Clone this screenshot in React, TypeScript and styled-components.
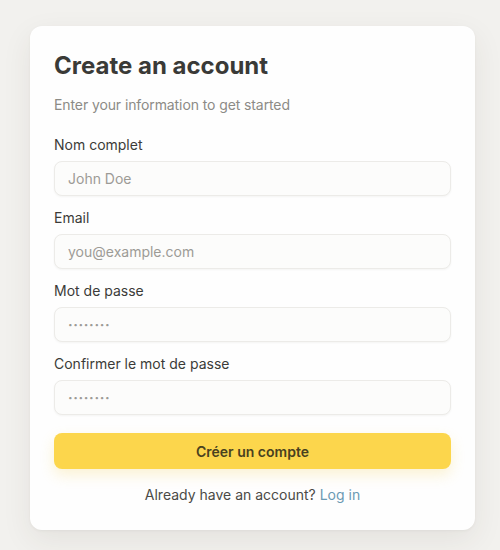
import styled, { createGlobalStyle } from 'styled-components';

const GlobalStyle = createGlobalStyle`
    * {
        box-sizing: border-box;
    }

    body {
        margin: 0;
        background-color: #f2f1ee;
        font-family: Inter, "Noto Sans", "Liberation Sans", sans-serif;
        color: #3b3b38;
    }
`;

const Page = styled.div`
    min-height: 550px;
    display: flex;
    justify-content: flex-start;
    padding: 26px 0 0 30px;
`;

const Card = styled.form`
    width: 445px;
    align-self: flex-start;
    background: #fefefe;
    border-radius: 12px;
    padding: 24px 24px 25px;
    box-shadow: 0 10px 30px rgba(60, 55, 40, 0.08), 0 1px 3px rgba(60, 55, 40, 0.05);
    display: flex;
    flex-direction: column;
`;

const Title = styled.h1`
    margin: 0;
    font-size: 24px;
    line-height: 32px;
    font-weight: 700;
    color: #3a3a37;
`;

const Subtitle = styled.p`
    margin: 13px 0 20px;
    font-size: 14px;
    line-height: 20px;
    color: #8c8b86;
    letter-spacing: -0.1px;
`;

const Field = styled.div`
    display: flex;
    flex-direction: column;
    gap: 6px;
    margin-bottom: 12px;
`;

const Label = styled.label`
    font-size: 14px;
    line-height: 20px;
    font-weight: 400;
    color: #3b3b38;
`;

const Input = styled.input<{ $secret?: boolean }>`
    height: 35px;
    width: 100%;
    border: 1px solid #ecebe8;
    border-radius: 8px;
    background: #fcfcfb;
    padding: 0 13px;
    font-family: inherit;
    font-size: 14px;
    color: #3b3b38;
    box-shadow: 0 1px 2px rgba(60, 55, 40, 0.05);
    outline: none;

    &::placeholder {
        color: #9c9b96;
        letter-spacing: ${({ $secret }) => ($secret ? '0.6px' : '0')};
        font-weight: ${({ $secret }) => ($secret ? 700 : 400)};
    }
`;

const SubmitButton = styled.button`
    margin-top: 6px;
    height: 36px;
    width: 100%;
    border: none;
    border-radius: 8px;
    background: #fcd64c;
    color: #49411f;
    font-family: inherit;
    font-size: 14px;
    font-weight: 600;
    box-shadow: 0 6px 14px rgba(240, 200, 60, 0.22);
    cursor: pointer;
`;

const Footer = styled.p`
    margin: 16px 0 0;
    text-align: center;
    font-size: 14px;
    line-height: 20px;
    color: #4a4a46;
`;

const Link = styled.a`
    color: #6a9ab3;
    text-decoration: none;
`;

const fields = [
    { id: 'name', label: 'Nom complet', type: 'text', placeholder: 'John Doe' },
    { id: 'email', label: 'Email', type: 'email', placeholder: 'you@example.com' },
    { id: 'password', label: 'Mot de passe', type: 'password', placeholder: '········' },
    { id: 'confirm', label: 'Confirmer le mot de passe', type: 'password', placeholder: '········' },
];

export default function App() {
    return (
        <>
            <GlobalStyle />
            <Page>
                <Card onSubmit={(e) => e.preventDefault()}>
                    <Title>Create an account</Title>
                    <Subtitle>Enter your information to get started</Subtitle>
                    {fields.map((f) => (
                        <Field key={f.id}>
                            <Label htmlFor={f.id}>{f.label}</Label>
                            <Input
                                id={f.id}
                                type={f.type}
                                placeholder={f.placeholder}
                                $secret={f.type === 'password'}
                            />
                        </Field>
                    ))}
                    <SubmitButton type="submit">Créer un compte</SubmitButton>
                    <Footer>
                        Already have an account? <Link href="#">Log in</Link>
                    </Footer>
                </Card>
            </Page>
        </>
    );
}
